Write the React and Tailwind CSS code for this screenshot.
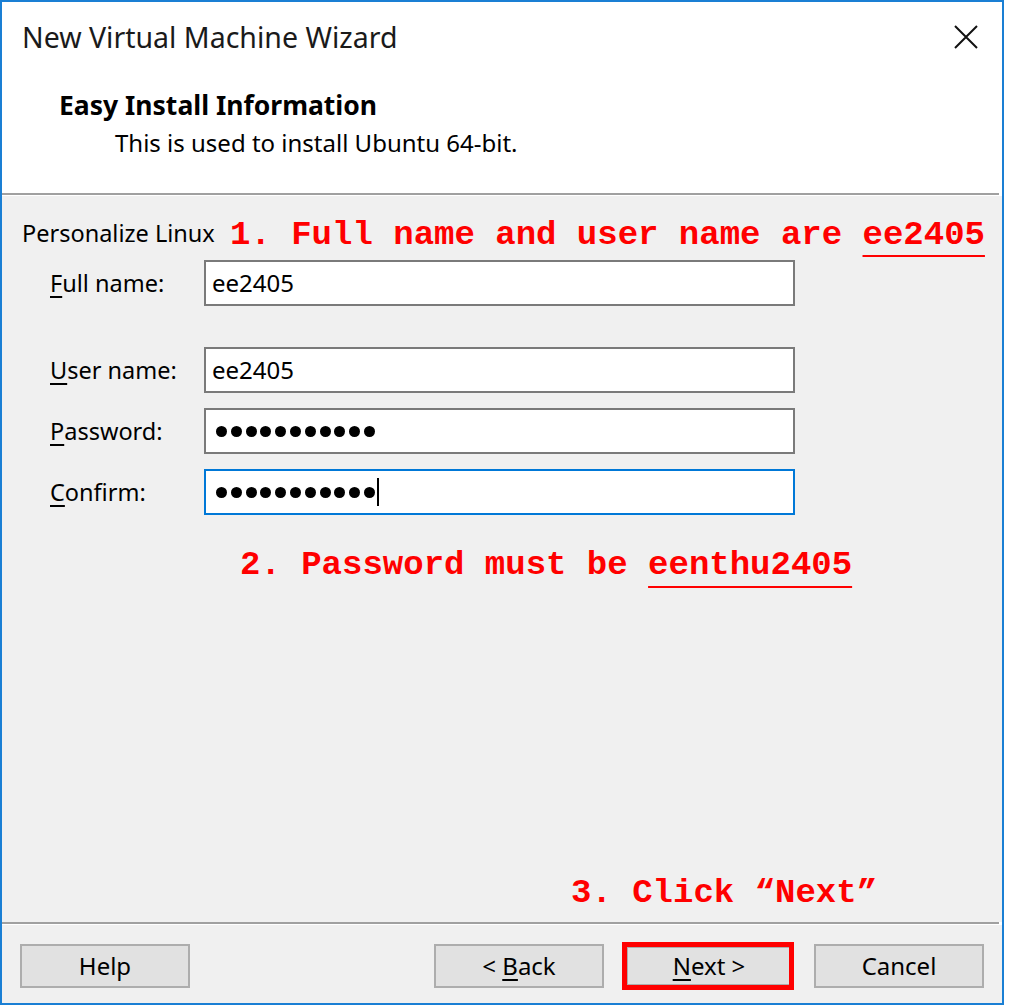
import React from "react";

const ui = "font-['Noto_Sans',sans-serif]";
const mono = "font-['Liberation_Mono',monospace] font-bold text-[#ff0000] text-[34px] leading-[40px] whitespace-pre";

function Dots({ caret }) {
  return (
    <div className="flex items-center pl-[10px] h-full">
      {Array.from({ length: 11 }).map((_, i) => (
        <span key={i} className="w-[11px] h-[11px] rounded-full bg-black mr-[3.8px]" />
      ))}
      {caret && <span className="w-[2px] h-[28px] bg-black -ml-[2px]" />}
    </div>
  );
}

function Field({ label, first, children, focused, mt }) {
  return (
    <div className={`flex items-center pl-[48px] ${mt}`}>
      <div className="w-[154px] text-[23.5px] leading-[30px]">
        <span className="underline underline-offset-[4px] decoration-[2px]">{first}</span>
        {label}
      </div>
      <div
        className={`w-[591px] h-[46px] bg-white border-2 ${
          focused ? "border-[#0078d7]" : "border-[#7a7a7a]"
        }`}
      >
        {children}
      </div>
    </div>
  );
}

function Button({ children, className = "" }) {
  return (
    <div
      className={`w-[170px] h-[44px] bg-[#e1e1e1] border-2 border-[#adadad] flex items-center justify-center text-[24px] ${className}`}
    >
      {children}
    </div>
  );
}

export default function App() {
  return (
    <div className={`w-[1014px] h-[1007px] bg-white text-black ${ui}`}>
      <div className="w-[1004px] h-[1005px] border-2 border-[#1a7fd4] flex flex-col">
        {/* header */}
        <div className="h-[191px] bg-white flex flex-col">
          <div className="h-[70px] flex items-center justify-between pl-[20px] pr-[24px]">
            <span className="text-[28.5px] text-[#1a1a1a]">New Virtual Machine Wizard</span>
            <svg width="24" height="24" viewBox="0 0 24 24">
              <path d="M1 1 L23 23 M23 1 L1 23" stroke="#111" strokeWidth="2" fill="none" />
            </svg>
          </div>
          <div className="mt-[17px] pl-[57px] text-[26.5px] leading-[32px] font-bold">
            Easy Install Information
          </div>
          <div className="mt-[7px] pl-[113px] text-[24px] leading-[30px]">
            This is used to install Ubuntu 64-bit.
          </div>
        </div>
        <div className="h-[2px] bg-[#a0a0a0] mr-[3px]" />
        <div className="h-[1px] bg-white" />

        {/* body */}
        <div className="flex-1 bg-[#f0f0f0] flex flex-col">
          <div className="flex items-center h-[40px] mt-[19px] pl-[20px]">
            <span className="w-[208px] text-[23.5px] -mt-[2px]">Personalize Linux</span>
            <span className={mono}>
              1. Full name and user name are{" "}
              <span className="underline decoration-[2px] underline-offset-[11px]">ee2405</span>
            </span>
          </div>

          <Field first="F" label="ull name:" mt="mt-[5px]">
            <div className="pl-[6px] text-[24px] leading-[42px]">ee2405</div>
          </Field>
          <Field first="U" label="ser name:" mt="mt-[41px]">
            <div className="pl-[6px] text-[24px] leading-[42px]">ee2405</div>
          </Field>
          <Field first="P" label="assword:" mt="mt-[15px]">
            <Dots />
          </Field>
          <Field first="C" label="onfirm:" mt="mt-[15px]" focused>
            <Dots caret />
          </Field>

          <div className={`${mono} mt-[30px] pl-[238px]`}>
            2. Password must be{" "}
            <span className="underline decoration-[2px] underline-offset-[12px]">eenthu2405</span>
          </div>

          <div className={`${mono} mt-auto mb-[9px] pl-[569px]`}>3. Click “Next”</div>
        </div>

        {/* footer */}
        <div className="h-[2px] bg-[#a0a0a0] mr-[3px]" />
        <div className="h-[1px] bg-white" />
        <div className="h-[78px] bg-[#f0f0f0] flex items-start pt-[19px] pl-[18px] pr-[18px]">
          <Button>Help</Button>
          <div className="flex-1" />
          <Button>
            &lt;&nbsp;<span className="underline underline-offset-[4px] decoration-[2px]">B</span>ack
          </Button>
          <div className="relative ml-[20px]">
            <Button className="border-[4px] border-[#0078d7]">
              <span className="underline underline-offset-[4px] decoration-[2px]">N</span>ext &gt;
            </Button>
            <div className="absolute -left-[2px] -top-[2px] w-[172px] h-[48px] border-[5px] border-[#ff0000]" />
          </div>
          <Button className="ml-[20px]">Cancel</Button>
        </div>
      </div>
    </div>
  );
}
